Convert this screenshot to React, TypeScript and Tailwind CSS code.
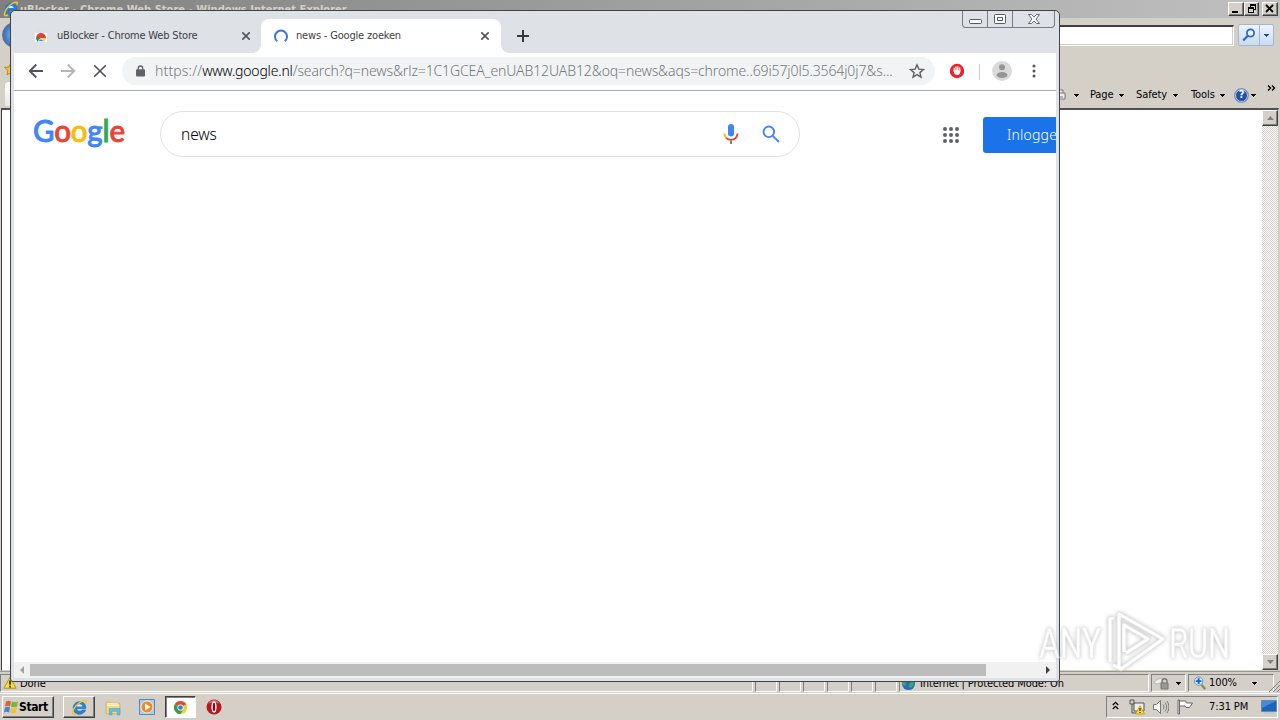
import type { ReactNode } from "react";
import clsx from "clsx";

const raised =
  "border border-t-white border-l-white border-r-[#404040] border-b-[#404040] bg-[#d4d0c8] shadow-[inset_-1px_-1px_0_#808080]";

function IeIcon({ className }: { className?: string }) {
  return (
    <svg viewBox="0 0 16 16" className={className}>
      <path d="M14 9H5.300c.1 1.700 1.300 2.600 2.900 2.600 1.100 0 1.900-.4 2.300-1.200h3.200c-.8 2.500-2.900 4-5.600 4-3.600 0-6-2.400-6-5.800s2.400-6 6-6S14.200 5 14 9Z" fill="#2583d8" stroke="#135aa6" strokeWidth=".5" />
      <path d="M5.400 7h5.300c-.2-1.300-1.100-2.100-2.600-2.100S5.700 5.700 5.400 7Z" fill="#d7efff" />
      <path d="M13.500 3.700C15.500 1.200 13.900.300 11 1.700 7 3.600 3 8 1.700 11.700c-.9 2.900.7 3.700 3.500 2.100" fill="none" stroke="#f4c430" strokeWidth="1.400" />
    </svg>
  );
}

function ChromeIcon({ className }: { className?: string }) {
  return (
    <svg viewBox="0 0 16 16" className={className}>
      <circle cx="8" cy="8" r="7" fill="#f6cf2f" />
      <path d="M8 8 1.940 4.500A7 7 0 0 1 14.060 4.500Z" fill="#dd4b3a" />
      <path d="M8 8 1.940 4.500A7 7 0 0 0 8 15l2.700-5Z" fill="#2f9e51" />
      <circle cx="8" cy="8" r="3.300" fill="#fff" />
      <circle cx="8" cy="8" r="2.500" fill="#3b7de0" />
    </svg>
  );
}

function Caret({ className }: { className?: string }) {
  return (
    <svg viewBox="0 0 5 3" className={clsx("h-[3px] w-[5px] shrink-0", className)} shapeRendering="crispEdges">
      <path d="M0 0h5L2.500 3Z" fill="currentColor" />
    </svg>
  );
}

function WinButton({ className, children }: { className?: string; children: ReactNode }) {
  return (
    <div className={clsx("h-[14px]", raised, className)}>
      <svg viewBox="0 0 14 12" className="h-3 w-[14px]" fill="none" stroke="#000" shapeRendering="crispEdges">
        {children}
      </svg>
    </div>
  );
}

function IeWindow() {
  return (
    <div className="flex h-[693px] flex-col">
      <div className="flex h-[18px] shrink-0 items-center bg-linear-to-r from-[#808080] to-[#c0c0c0] pr-[2px] pl-[3px]">
        <IeIcon className="size-4" />
        <span className="mt-[2px] ml-px text-[11px] leading-[14px] font-bold tracking-[0.04px] text-[#d4d0c8]">
          uBlocker - Chrome Web Store - Windows Internet Explorer
        </span>
        <div className="ml-auto flex">
          <WinButton className="w-4"><path d="M3 8.500h6M3 9.500h6" /></WinButton>
          <WinButton className="w-[15px]">
            <path d="M5 2.500h6M5.500 2v2M10.500 2v5M9 6.500h2M5 1.500h6M3 5h6M3 4.500h6M3.500 4v6M8.500 4v6M3 9.500h6" />
          </WinButton>
          <WinButton className="ml-[3px] w-4">
            <path d="m3 2 7 7m0-7-7 7" strokeWidth="1.800" shapeRendering="auto" />
          </WinButton>
        </div>
      </div>

      <div className="flex h-[34px] shrink-0 items-center">
        <div className="ml-[2px] size-[26px] shrink-0 rounded-full border border-[#627792] bg-radial from-[#8cc7f4] to-[#17499a]" />
        <div className="ml-5 h-[21px] grow border border-t-2 border-[#fff] border-t-[#404040] bg-white shadow-[inset_-1px_-1px_0_#d4d0c8]" />
        <div className="mr-[6px] ml-[4px] flex h-[22px] w-9 rounded-[2px] border border-[#a6b6cd] bg-linear-to-b from-[#edf4fd] to-[#cbdcf2]">
          <div className="flex w-[21px] items-center justify-center border-r border-[#a6b6cd]">
            <svg viewBox="0 0 14 14" className="size-[14px]" fill="none" stroke="#2868c8">
              <circle cx="8.500" cy="5" r="3.600" strokeWidth="1.800" fill="#e9f5ff" />
              <path d="m5.800 7.800-4.600 4.700" strokeWidth="2.200" />
            </svg>
          </div>
          <div className="flex grow items-center justify-center text-[#164a96]"><Caret /></div>
        </div>
      </div>

      <div className="flex h-[30px] shrink-0 items-center">
        <svg viewBox="0 0 16 16" className="size-4">
          <path d="M8 1.500 10 6l4.500.400-3.400 3 1 4.600L8 11.600 3.900 14l1-4.600-3.400-3L6 6Z" transform="translate(3 2)" fill="#f6c83b" stroke="#b98a1d" />
        </svg>
      </div>

      <div className="flex h-[26px] shrink-0">
        <div className="ml-[5px] h-6 w-20 rounded-t-sm bg-linear-to-b from-white to-[#ece9e3]" />
        <div className="mt-px ml-auto flex h-6 items-center text-[11px]">
          <svg viewBox="0 0 12 12" className="mr-[7px] size-3" fill="#eee" stroke="#777">
            <path d="M2 4h8v6H2ZM4 4V1h4v3M4 8h4" />
          </svg>
          <Caret className="mr-[11px]" />
          <span className="mr-[5px] w-[24px]">Page</span>
          <Caret className="mr-3" />
          <span className="mr-[5px] w-8">Safety</span>
          <Caret className="mr-[13px]" />
          <span className="mr-[4px] w-[25px]">Tools</span>
          <Caret className="mr-[9px]" />
          <div className="mr-[2px] flex size-[15px] items-center justify-center rounded-full border border-[#8b9bb9] bg-[#2450ac] text-[11px] font-bold text-white shadow-[inset_0_0_0_1px_#c3d3ee]">
            ?
          </div>
          <Caret className="mr-[11px]" />
          <svg viewBox="0 0 9 6" className="mt-[-15px] mr-1 h-[6px] w-[9px]" fill="none" stroke="#000" strokeWidth="1.400">
            <path d="m1 .5 2.500 2.500L1 5.500M5 .5 7.500 3 5 5.500" />
          </svg>
        </div>
      </div>

      <div className="mr-px ml-px flex grow border border-t-2 border-[#d4d0c8] border-t-[#505050] border-l-[#404040] bg-white">
        <div className="ml-auto flex w-4 flex-col justify-between bg-[repeating-conic-gradient(#fff_0_25%,#d4d0c8_0_50%)] bg-[length:2px_2px]">
          <div className={clsx("flex h-4 items-center justify-center text-[#808080]", raised)}>
            <svg viewBox="0 0 7 4" className="h-1 w-[7px]"><path d="M0 4h7L3.500 0Z" fill="currentColor" /></svg>
          </div>
          <div className={clsx("flex h-4 items-center justify-center text-[#808080]", raised)}>
            <svg viewBox="0 0 7 4" className="h-1 w-[7px]"><path d="M0 0h7L3.500 4Z" fill="currentColor" /></svg>
          </div>
        </div>
      </div>

      <div className="flex h-[22px] shrink-0 items-stretch border-t border-[#9a9790] pt-[2px] pb-px text-[11px]">
        <div className="flex w-[753px] items-center border border-[#fff] border-t-[#808080] border-l-[#808080] pl-[2px]">
          <svg viewBox="0 0 16 16" className="size-[14px]">
            <path d="M8 1.500 15 14H1Z" fill="#ffdf2e" stroke="#a78714" />
            <path d="M8 5v5M8 11v2" stroke="#000" strokeWidth="1.600" />
          </svg>
          <span className="mt-[2px] ml-[3px]">Done</span>
        </div>
        {[1, 2, 3, 4, 5, 6].map((n) => (
          <div key={n} className="ml-[2px] w-[22px] border border-white border-t-[#808080] border-l-[#808080]" />
        ))}
        <div className="ml-[2px] flex w-[250px] items-center border border-white border-t-[#808080] border-l-[#808080] pl-px">
          <svg viewBox="0 0 16 16" className="size-[15px]">
            <circle cx="8" cy="8" r="7" fill="#2b6bc5" />
            <path d="M3 4c3-3 6-1 5 1s-4 1-3 4-3 1-4-1ZM10 7c3-2 5 0 3 3s-4 3-5 1Z" fill="#39ad54" />
          </svg>
          <span className="mt-[2px] ml-[4px] whitespace-nowrap">Internet | Protected Mode: On</span>
        </div>
        <div className="ml-[2px] flex w-[35px] items-center border border-white border-t-[#808080] border-l-[#808080] pl-[2px]">
          <svg viewBox="0 0 16 14" className="h-[14px] w-4">
            <path d="M0 7c2-4 6-5 9-4l-1 3-4 2Z" fill="#eee" stroke="#aaa" strokeWidth=".7" />
            <path d="M8 7V5c0-3 5-3 5 0v2" fill="none" stroke="#777" strokeWidth="1.300" />
            <path d="M7 7h7v6H7Z" fill="#999" stroke="#777" />
          </svg>
          <Caret className="ml-[6px]" />
        </div>
        <div className="ml-[2px] flex w-[86px] items-center border border-white border-t-[#808080] border-l-[#808080] pl-1">
          <svg viewBox="0 0 16 16" className="size-[15px]">
            <path d="m8 8 5 6" stroke="#9b8a63" strokeWidth="2.500" />
            <circle cx="6" cy="5.500" r="4.500" fill="#d6ecff" stroke="#5c8cc9" />
            <path d="M3 5.500h6M6 2.500v6" stroke="#1c5fc5" strokeWidth="2" />
          </svg>
          <span className="mt-px ml-px w-[28px]">100%</span>
          <Caret className="ml-[15px]" />
        </div>
        <svg viewBox="0 0 12 12" className="mt-auto -ml-[6px] size-3 shrink-0" stroke="#808080">
          <path d="M1 12 12 1M5 12l7-7M9 12l3-3" />
        </svg>
      </div>
    </div>
  );
}

function Taskbar() {
  return (
    <div className="flex h-[27px] items-center border-t border-white bg-[#d4d0c8] pr-[2px] pl-[2px] text-[11px]">
      <div className={clsx("flex h-[22px] w-[52px] items-center pl-px", raised)}>
        <svg viewBox="1 1 15 13" className="h-[14px] w-[15px] shrink-0">
          <path d="M3 2c2-1 3-1 5 0L7 7C5 6 4 6 2 7Z" fill="#e4602e" />
          <path d="M9 2c2 1 4 1 6 0l-1 5c-2 1-4 1-6 0Z" fill="#79b43c" />
          <path d="M2 8c2-1 3-1 5 0l-1 5c-2-1-3-1-5 0Z" fill="#3c87d3" />
          <path d="M8 8c2 1 4 1 6 0l-1 5c-2 1-4 1-6 0Z" fill="#f3c32f" />
        </svg>
        <span className="text-xs font-bold tracking-[-0.4px]">Start</span>
      </div>
      <div className={clsx("ml-[9px] flex h-[22px] w-8 items-center justify-center", raised)}>
        <IeIcon className="size-[17px]" />
      </div>
      <svg viewBox="0 0 16 16" className="ml-[10px] size-[17px]">
        <path d="M1 3h5l1 1h7v10H1Z" fill="#f2d984" stroke="#cba951" strokeWidth=".7" />
        <path d="M2 4.500h10M2 6h11" stroke="#fff7d0" />
        <path d="M4 15V9h10v6h-2.500v-3.500h-5V15Z" fill="#6cbde8" stroke="#4293c1" strokeWidth=".5" />
      </svg>
      <svg viewBox="0 0 16 16" className="ml-[17px] size-4">
        <path d="M.5.500h15v15H.5Z" fill="#a9cdea" stroke="#4c8dbc" />
        <circle cx="8" cy="8" r="6" fill="#f18b22" stroke="#fff" strokeWidth=".7" />
        <path d="m6 4.500 5.500 3.500L6 11.500Z" fill="#fff" />
      </svg>
      <div className="ml-[10px] flex h-[22px] w-[31px] items-center justify-center border border-t-[#404040] border-r-white border-b-white border-l-[#404040] bg-white shadow-[inset_1px_1px_0_#808080]">
        <ChromeIcon className="size-[15px]" />
      </div>
      <svg viewBox="0 0 16 16" className="ml-[10px] size-4">
        <circle cx="8" cy="8" r="7.500" fill="#b91720" />
        <path d="M2 5a6.500 6.500 0 0 1 12 0C11 3 5 3 2 5Z" fill="#e25c59" />
        <ellipse cx="8" cy="8" rx="1.900" ry="5" fill="#8b0a11" stroke="#fff" strokeWidth="1.300" />
      </svg>

      <div className="ml-auto flex h-[22px] w-[172px] items-center border border-t-[#808080] border-r-white border-b-white border-l-[#808080] pl-[5px]">
        <svg viewBox="0 0 7 9" className="mb-[3px] h-[9px] w-[7px]" fill="none" stroke="#000" strokeWidth="1.300">
          <path d="M.8 4 3.500 1.300 6.200 4M.8 8l2.700-2.700L6.200 8" />
        </svg>
        <svg viewBox="0 0 16 16" className="ml-[10px] size-4">
          <path d="M5 4h10v8H5Z" fill="#eee" stroke="#555" />
          <path d="M1 1v4h4V1M3 5v9h4M2 0v2M4 0v2" fill="none" stroke="#555" />
          <path d="M11 6.500 15.500 15h-9Z" fill="#ffdc25" stroke="#a98611" strokeWidth=".6" />
          <path d="M11 9v3M11 13v1" stroke="#000" />
        </svg>
        <svg viewBox="0 0 16 16" className="ml-2 size-4" fill="none" stroke="#777">
          <path d="M.5 5.500h3l4-4v13l-4-4h-3Z" fill="#fff" />
          <path d="M10 5.500c1.200 1.500 1.200 3.500 0 5M12 3.500c2.200 3 2.200 6 0 9M14 2c2.500 4 2.500 8 0 12" />
        </svg>
        <svg viewBox="0 0 16 16" className="ml-2 size-4" fill="#fff" stroke="#666">
          <path d="M1 1h1.500v14H1Z" />
          <path d="M2.500 2h6l1 2h6l-3 4.500H9l-1-1.500H2.500Z" />
        </svg>
        <span className="ml-4 w-10 whitespace-nowrap">7:31 PM</span>
        <svg viewBox="0 0 16 14" className="ml-[12px] h-[14px] w-4">
          <path d="M.5.500h15v11H.5Z" fill="#1c65bd" stroke="#6e8aa8" />
          <path d="M1 1h14L1 8Z" fill="#438cd5" />
          <path d="M3 13h10" stroke="#b1bfcc" />
        </svg>
      </div>
    </div>
  );
}

function CloseX({ className }: { className?: string }) {
  return (
    <svg viewBox="0 0 8 8" className={clsx("size-2", className)} stroke="#50545a" strokeWidth="1.600">
      <path d="m.3.300 7.400 7.400m0-7.400L.3 7.700" />
    </svg>
  );
}

function TabStrip() {
  return (
    <div className="flex h-[42px] items-start bg-[#dee1e6]">
      <div className="mt-2 flex h-[34px] w-[247px] items-center pl-5 text-[#3c4043]">
        <svg viewBox="0 0 14 14" className="size-[14px]">
          <path d="M4 4V2q0-1 1-1h4q1 0 1 1v2" fill="none" stroke="#dadde0" />
          <path d="M1 4h12v8q0 1-1 1H2q-1 0-1-1Z" fill="#fff" />
          <path d="M2 9a5 5 0 0 1 10 0H7Z" fill="#db4437" />
          <path d="M2 9a5 5 0 0 0 2 4l3-4Z" fill="#0f9d58" />
          <path d="M12 9a5 5 0 0 1-2 4H7V9Z" fill="#ffcd40" />
          <path d="M4.500 12.500a2.500 2.500 0 1 1 5 0Z" fill="#4285f4" stroke="#fff" strokeWidth=".7" />
        </svg>
        <span className="mt-px ml-[9px] text-[11px] whitespace-nowrap tracking-[-0.18px]">uBlocker - Chrome Web Store</span>
        <CloseX className="mr-[11px] ml-auto" />
      </div>
      <div className="relative mt-2 flex h-[34px] w-[240px] items-center rounded-t-lg bg-white pl-[13px] text-[#3c4043]">
        <div className="absolute bottom-0 -left-2 size-2 bg-[radial-gradient(circle_at_0_0,#dee1e6_7.5px,#fff_8px)]" />
        <div className="absolute -right-2 bottom-0 size-2 bg-[radial-gradient(circle_at_100%_0,#dee1e6_7.5px,#fff_8px)]" />
        <svg viewBox="0 0 14 14" className="size-[14px]" fill="none" stroke="#3a78d4" strokeWidth="2">
          <path d="M3.200 12.200A6 6 0 1 1 10.800 12.200" />
        </svg>
        <span className="mt-px ml-2 text-[11px] whitespace-nowrap tracking-[-0.18px]">news - Google zoeken</span>
        <CloseX className="mr-3 ml-auto" />
      </div>
      <svg viewBox="0 0 12 12" className="mt-[19px] ml-[16px] size-3" stroke="#35393e" strokeWidth="2">
        <path d="M6 0v12M0 6h12" />
      </svg>
      <div className="mr-px ml-auto flex h-[17px] w-[93px] rounded-b-[4px] border border-t-0 border-[#777b84]">
        <div className="flex w-[25px] items-center justify-center border-r border-[#777b84]">
          <svg viewBox="0 0 13 5" className="mt-[5px] h-[5px] w-[13px]"><rect x=".5" y=".5" width="12" height="4" rx="1" fill="#fff" stroke="#555962" /></svg>
        </div>
        <div className="flex w-[25px] items-center justify-center border-r border-[#777b84]">
          <svg viewBox="0 0 12 10" className="h-[10px] w-3" fill="#fff" stroke="#555962"><rect x=".5" y=".5" width="11" height="9" rx="1" /><path d="M3.500 3.500h5v3h-5Z" /></svg>
        </div>
        <div className="flex grow items-center justify-center">
          <svg viewBox="0 0 12 10" className="h-[10px] w-3" fill="#fff" stroke="#555962" strokeWidth=".9">
            <path d="M.5.500h3L6 3 8.500.500h3L8 5l3.500 4.500h-3L6 7 3.500 9.500h-3L4 5Z" />
          </svg>
        </div>
      </div>
    </div>
  );
}

function Toolbar() {
  return (
    <div className="flex h-[38px] items-center border-b border-[#a9abae] bg-white">
      <svg viewBox="0 0 16 16" className="-mt-px ml-[14px] size-4" fill="none" stroke="#505357" strokeWidth="1.900">
        <path d="M15 8H2M8.300 1.500 1.800 8l6.500 6.500" />
      </svg>
      <svg viewBox="0 0 16 16" className="-mt-px ml-4 size-4" fill="none" stroke="#b5b7ba" strokeWidth="1.900">
        <path d="M1 8h13M7.700 1.500 14.200 8l-6.500 6.500" />
      </svg>
      <svg viewBox="0 0 14 14" className="-mt-px ml-[17px] size-[14px]" fill="none" stroke="#505357" strokeWidth="1.600">
        <path d="m1.200 1.200 11.600 11.600m0-11.600L1.200 12.800" />
      </svg>
      <div className="-mt-px ml-[15px] flex h-7 w-[813px] items-center rounded-full bg-[#f1f3f4] pl-[14px]">
        <svg viewBox="0 0 9 12" className="-mt-px h-3 w-[9px]" fill="none">
          <path d="M2.300 5V3.200a2.200 2.200 0 0 1 4.400 0V5" stroke="#5f6368" strokeWidth="1.300" />
          <rect y="4.300" width="9" height="7.200" rx="1" fill="#5f6368" />
        </svg>
        <span className="ml-[10px] w-[740px] font-['Noto_Sans',sans-serif] text-sm font-light tracking-[-0.115px] whitespace-nowrap text-[#73787d]">
          <span className="tracking-[0.15px]">https://</span>
          <span className="tracking-[-0.2px] text-black">www.google.nl</span>/search?q=news&amp;rlz=1C1GCEA_enUAB12UAB12&amp;oq=news&amp;aqs=chrome..69i57j0l5.3564j0j7&amp;s...
        </span>
        <svg viewBox="0 0 16 16" className="ml-[14px] size-4" fill="none" stroke="#5f6368" strokeWidth="1.400">
          <path d="m8 1.800 1.800 4.300 4.700.4-3.600 3.100 1.100 4.600L8 11.700l-4 2.500 1.100-4.600-3.600-3.100 4.700-.4Z" />
        </svg>
      </div>
      <svg viewBox="0 0 16 16" className="-mt-px ml-[14px] size-4">
        <circle cx="8" cy="8" r="6.200" fill="#f3282e" stroke="#ee2027" strokeWidth="2" />
        <path d="M5.200 8V5.200M7 8V3.900M8.900 8V3.900M10.700 8V5" stroke="#fff" strokeWidth="1.300" strokeLinecap="round" />
        <path d="M4.600 7.300h6.800c0 3-.8 4.800-3.200 4.800S5 10.600 4.600 7.300Z" fill="#fff" />
      </svg>
      <div className="ml-[14px] h-4 w-px bg-[#cbcdd0]" />
      <svg viewBox="0 0 20 20" className="-mt-px ml-3 size-5">
        <circle cx="10" cy="10" r="10" fill="#dadada" />
        <circle cx="10" cy="6.300" r="3" fill="#969696" />
        <ellipse cx="10" cy="14" rx="5.500" ry="3" fill="#969696" />
      </svg>
      <svg viewBox="0 0 4 14" className="-mt-px ml-5 h-[14px] w-1" fill="#505357">
        <circle cx="2" cy="2" r="1.500" />
        <circle cx="2" cy="7" r="1.500" />
        <circle cx="2" cy="12" r="1.500" />
      </svg>
    </div>
  );
}

function GoogleLogo() {
  return (
    <svg viewBox="0 0 92 34" className="h-[34px] w-[92px] shrink-0 overflow-visible font-['Lato',sans-serif] text-[30px] font-medium">
      <text x="-1" y="25" textLength="92" lengthAdjust="spacingAndGlyphs" strokeWidth=".9">
        <tspan fill="#4285f4" stroke="#4285f4">G</tspan>
        <tspan fill="#ea4335" stroke="#ea4335">o</tspan>
        <tspan fill="#fbbc05" stroke="#fbbc05">o</tspan>
        <tspan fill="#4285f4" stroke="#4285f4">g</tspan>
        <tspan fill="#34a853" stroke="#34a853">l</tspan>
        <tspan fill="#ea4335" stroke="#ea4335">e</tspan>
      </text>
    </svg>
  );
}

function GooglePage() {
  return (
    <div className="flex grow flex-col overflow-hidden bg-white">
      <div className="flex h-[86px] w-full items-center overflow-hidden">
        <div className="ml-5"><GoogleLogo /></div>
        <div className="ml-[34px] flex h-[46px] w-[640px] shrink-0 items-center rounded-full border border-[#dfe1e5] pl-5">
          <span className="mt-[2px] font-['Noto_Sans',sans-serif] text-[15.500px] font-light text-black">news</span>
          <svg viewBox="0 0 16 22" className="mr-[23px] ml-auto h-[22px] w-4" fill="none">
            <rect x="5" y="1" width="6" height="12.500" rx="3" fill="#4285f4" />
            <path d="M1.500 10.500c0 2 .8 3.400 1.900 4.500" stroke="#fbbc05" strokeWidth="1.900" />
            <path d="M3.200 14.800c2.500 2.800 7.100 2.800 9.600 0 1.100-1.200 1.700-2.600 1.700-4.300" stroke="#ea4335" strokeWidth="1.900" />
            <path d="M8 17.500V21" stroke="#34a853" strokeWidth="1.900" />
          </svg>
          <svg viewBox="0 0 18 18" className="mr-[19px] size-[18px]" fill="none" stroke="#4285f4" strokeWidth="1.900">
            <circle cx="6.800" cy="6.800" r="5.300" />
            <path d="m10.800 10.800 6.200 6.200" />
          </svg>
        </div>
        <svg viewBox="0 0 16 16" className="mt-[2px] ml-[143px] size-4 shrink-0" fill="#5f6368">
          {[2, 8, 14].map((y) => [2, 8, 14].map((x) => <circle key={`${x}-${y}`} cx={x} cy={y} r="2" />))}
        </svg>
        <div className="mt-[2px] ml-6 flex h-9 w-[97px] shrink-0 items-center rounded-[3px] bg-[#1a73e8] pl-6 font-['Noto_Sans',sans-serif] text-sm font-light tracking-[0.2px] text-white">
          Inloggen
        </div>
      </div>
      <div className="mt-auto flex h-4 items-center bg-[#f1f1f1]">
        <svg viewBox="0 0 4 8" className="ml-[6px] h-2 w-1"><path d="M4 0v8L0 4Z" fill="#a3a3a3" /></svg>
        <div className="ml-[6px] h-3 w-[956px] bg-[#bdbdbd]" />
        <svg viewBox="0 0 4 8" className="mr-[6px] ml-auto h-2 w-1"><path d="M0 0v8l4-4Z" fill="#404040" /></svg>
      </div>
    </div>
  );
}

function ChromeWindow() {
  return (
    <div className="absolute top-[10px] left-[10px] flex h-[672px] w-[1050px] flex-col rounded-t-[5px] rounded-b-[3px] border border-[#404348] bg-[#dee1e6] pr-[3px] pb-[3px] pl-[3px]">
      <TabStrip />
      <Toolbar />
      <GooglePage />
    </div>
  );
}

function Watermark() {
  return (
    <div className="absolute top-[606px] left-[1036px] flex h-[68px] w-[200px] items-center font-['Roboto',sans-serif] opacity-75 drop-shadow-[0_0_2px_#aaa]">
      <svg viewBox="0 0 200 68" className="h-[68px] w-[200px] overflow-visible" fill="#fff" stroke="#e4e4e4" strokeWidth=".5">
        <text x="3" y="52" fontSize="43" textLength="62" lengthAdjust="spacingAndGlyphs">ANY</text>
        <g fill="none" strokeLinejoin="round">
          <path d="M74 56V13l4-1M83 61V8l44 25-42 30-8-4M88 46V19l24 14-22 14" stroke="#d9d9d9" strokeWidth="4.500" />
          <path d="M74 56V13l4-1M83 61V8l44 25-42 30-8-4M88 46V19l24 14-22 14" stroke="#fff" strokeWidth="3" />
        </g>
        <text x="133" y="52" fontSize="43" textLength="61" lengthAdjust="spacingAndGlyphs">RUN</text>
      </svg>
    </div>
  );
}

export default function App() {
  return (
    <div className="relative h-[720px] w-[1280px] overflow-hidden bg-[#d4d0c8] font-['DejaVu_Sans_Condensed','DejaVu_Sans',sans-serif] tracking-[-0.1px] text-black">
      <IeWindow />
      <Taskbar />
      <ChromeWindow />
      <Watermark />
    </div>
  );
}
